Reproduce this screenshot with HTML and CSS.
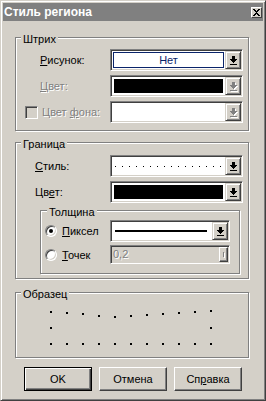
FILE: index.html
```html
<!DOCTYPE html>
<html lang="ru">

<head>
    <meta charset="UTF-8">
    <meta name="viewport" content="width=device-width, initial-scale=1.0">
    <title>Стиль региона</title>
    <link rel="stylesheet" href="styles.css">
</head>

<body>
    <div class="window">
        <div class="titlebar">
            <span class="title">Стиль региона</span>
            <span class="close">
                <svg width="7" height="7" viewBox="0 0 7 7" shape-rendering="crispEdges">
                    <path d="M0 0h2v1h-2zM5 0h2v1h-2zM1 1h2v1h-2zM4 1h2v1h-2zM2 2h3v1h-3zM3 3h1v1h-1zM2 4h3v1h-3zM1 5h2v1h-2zM4 5h2v1h-2zM0 6h2v1h-2zM5 6h2v1h-2z" />
                </svg>
            </span>
        </div>

        <div class="content">
            <div class="group group-stroke">
                <div class="legend">Штрих</div>
                <div class="rows">
                    <div class="row">
                        <span class="label label-stroke"><u>Р</u>исунок:</span>
                        <div class="combo">
                            <div class="value value-focus">Нет</div>
                            <div class="drop">
                                <svg class="arrow" width="7" height="9" viewBox="0 0 7 9" shape-rendering="crispEdges">
                                    <path d="M2 0h3v3h2v1h-1v1h-1v1h-1v1h-1v-1h-1v-1h-1v-1h-1v-1h2zM0 8h7v1h-7z" />
                                </svg>
                            </div>
                        </div>
                    </div>
                    <div class="row">
                        <span class="label label-stroke disabled"><u>Ц</u>вет:</span>
                        <div class="combo">
                            <div class="value"><span class="swatch"></span></div>
                            <div class="drop">
                                <svg class="arrow arrow-off" width="8" height="10" viewBox="0 0 8 10" shape-rendering="crispEdges">
                                    <path class="shade" d="M3 1h3v3h2v1h-1v1h-1v1h-1v1h-1v-1h-1v-1h-1v-1h-1v-1h2zM1 9h7v1h-7z" />
                                    <path d="M2 0h3v3h2v1h-1v1h-1v1h-1v1h-1v-1h-1v-1h-1v-1h-1v-1h2zM0 8h7v1h-7z" />
                                </svg>
                            </div>
                        </div>
                    </div>
                    <div class="row row-check">
                        <span class="check"></span>
                        <span class="label label-check disabled">Цвет <u>ф</u>она:</span>
                        <div class="combo">
                            <div class="value"></div>
                            <div class="drop">
                                <svg class="arrow arrow-off" width="8" height="10" viewBox="0 0 8 10" shape-rendering="crispEdges">
                                    <path class="shade" d="M3 1h3v3h2v1h-1v1h-1v1h-1v1h-1v-1h-1v-1h-1v-1h-1v-1h2zM1 9h7v1h-7z" />
                                    <path d="M2 0h3v3h2v1h-1v1h-1v1h-1v1h-1v-1h-1v-1h-1v-1h-1v-1h2zM0 8h7v1h-7z" />
                                </svg>
                            </div>
                        </div>
                    </div>
                </div>
            </div>

            <div class="group group-border">
                <div class="legend">Граница</div>
                <div class="rows">
                    <div class="row">
                        <span class="label label-border"><u>С</u>тиль:</span>
                        <div class="combo">
                            <div class="value"><span class="dotted"></span></div>
                            <div class="drop">
                                <svg class="arrow" width="7" height="9" viewBox="0 0 7 9" shape-rendering="crispEdges">
                                    <path d="M2 0h3v3h2v1h-1v1h-1v1h-1v1h-1v-1h-1v-1h-1v-1h-1v-1h2zM0 8h7v1h-7z" />
                                </svg>
                            </div>
                        </div>
                    </div>
                    <div class="row">
                        <span class="label label-border">Цв<u>е</u>т:</span>
                        <div class="combo">
                            <div class="value"><span class="swatch"></span></div>
                            <div class="drop">
                                <svg class="arrow" width="7" height="9" viewBox="0 0 7 9" shape-rendering="crispEdges">
                                    <path d="M2 0h3v3h2v1h-1v1h-1v1h-1v1h-1v-1h-1v-1h-1v-1h-1v-1h2zM0 8h7v1h-7z" />
                                </svg>
                            </div>
                        </div>
                    </div>
                </div>

                <div class="group group-width">
                    <div class="legend legend-sub">Толщина</div>
                    <div class="rows rows-sub">
                        <div class="row">
                            <span class="radio"><span class="dot"></span></span>
                            <span class="label label-radio"><u>П</u>иксел</span>
                            <div class="combo combo-short">
                                <div class="value"><span class="solid"></span></div>
                                <div class="drop">
                                    <svg class="arrow" width="7" height="9" viewBox="0 0 7 9" shape-rendering="crispEdges">
                                        <path d="M2 0h3v3h2v1h-1v1h-1v1h-1v1h-1v-1h-1v-1h-1v-1h-1v-1h2zM0 8h7v1h-7z" />
                                    </svg>
                                </div>
                            </div>
                        </div>
                        <div class="row row-edit">
                            <span class="radio"></span>
                            <span class="label label-radio"><u>Т</u>очек</span>
                            <div class="edit">
                                <span class="edit-text disabled">0,2</span>
                                <span class="spin"><span class="spin-mark"></span></span>
                            </div>
                        </div>
                    </div>
                </div>
            </div>

            <div class="group group-sample">
                <div class="legend">Образец</div>
                <svg class="sample" width="232" height="44" viewBox="0 0 232 44" shape-rendering="crispEdges">
                    <g fill="#000">
                        <rect x="34" y="8" width="2" height="2" />
                        <rect x="50" y="9" width="2" height="2" />
                        <rect x="66" y="10" width="2" height="2" />
                        <rect x="82" y="12" width="2" height="2" />
                        <rect x="98" y="13" width="2" height="2" />
                        <rect x="114" y="12" width="2" height="2" />
                        <rect x="130" y="11" width="2" height="2" />
                        <rect x="146" y="10" width="2" height="2" />
                        <rect x="162" y="9" width="2" height="2" />
                        <rect x="178" y="8" width="2" height="2" />
                        <rect x="194" y="7" width="2" height="2" />
                        <rect x="34" y="24" width="2" height="2" />
                        <rect x="194" y="24" width="2" height="2" />
                        <rect x="34" y="40" width="2" height="2" />
                        <rect x="50" y="40" width="2" height="2" />
                        <rect x="66" y="40" width="2" height="2" />
                        <rect x="82" y="40" width="2" height="2" />
                        <rect x="98" y="40" width="2" height="2" />
                        <rect x="114" y="40" width="2" height="2" />
                        <rect x="130" y="40" width="2" height="2" />
                        <rect x="146" y="40" width="2" height="2" />
                        <rect x="162" y="40" width="2" height="2" />
                        <rect x="178" y="40" width="2" height="2" />
                        <rect x="194" y="40" width="2" height="2" />
                    </g>
                </svg>
            </div>

            <div class="buttons">
                <button class="btn btn-default">OK</button>
                <button class="btn">Отмена</button>
                <button class="btn">Сп<u>р</u>авка</button>
            </div>
        </div>
    </div>
</body>

</html>
```

FILE: styles.css
```css
* {
    box-sizing: border-box;
}

body {
    margin: 0;
    font-family: "Liberation Sans", Arial, sans-serif;
    font-size: 11px;
    color: #000;
}

u {
    text-decoration: underline;
    text-underline-offset: 1px;
}

.window {
    width: 266px;
    height: 401px;
    background-color: #d4d0c8;
    border: 1px solid;
    border-color: #d4d0c8 #404040 #404040 #d4d0c8;
    box-shadow: inset 1px 1px #fff, inset -1px -1px #808080;
    padding: 2px;
}

.titlebar {
    height: 18px;
    background-color: #808080;
    display: flex;
    align-items: center;
    justify-content: space-between;
    padding: 0 1px 0 1px;
    color: #fff;
    font-size: 12px;
    font-weight: bold;
}

.close {
    width: 11px;
    height: 11px;
    background-color: #d4d0c8;
    border: 1px solid;
    border-color: #fff #404040 #404040 #fff;
    display: flex;
    align-items: center;
    justify-content: center;
}

.content {
    padding-top: 16px;
}

/* etched group frame */
.group {
    border: 1px solid #808080;
    box-shadow: inset 1px 1px #fff, 1px 1px #fff;
    margin: 0 14px 0 12px;
}

.legend {
    width: fit-content;
    margin: -5px 0 0 5px;
    padding: 0 2px;
    line-height: 13px;
    background-color: #d4d0c8;
}

.legend-sub {
    margin-left: 6px;
}

.group-stroke {
    padding: 0 5px 7px 0;
}

.group-stroke .rows {
    margin-top: 3px;
}

.group-border {
    margin-top: 11px;
    padding: 0 5px 4px 0;
}

.group-border > .rows {
    margin-top: 4px;
}

.group-width {
    margin: 7px 3px 0 24px;
    padding: 0 9px 9px 0;
}

.rows-sub {
    margin-top: 1px;
}

.group-sample {
    margin-top: 13px;
    padding-bottom: 10px;
}

.sample {
    display: block;
    margin-top: 2px;
}

.row {
    display: flex;
    align-items: center;
    height: 22px;
}

.row + .row {
    margin-top: 4px;
}

.rows-sub .row + .row {
    margin-top: 3px;
}

.row-edit {
    height: 19px;
}

.label {
    white-space: nowrap;
}

.label-stroke {
    width: 94px;
    padding-left: 24px;
}

.label-border {
    width: 94px;
    padding-left: 19px;
}

.row-check {
    padding-left: 9px;
}

.label-check {
    width: 68px;
}

.label-radio {
    width: 48px;
}

.disabled {
    color: #808080;
    text-shadow: 1px 1px #fff;
}

.check {
    width: 13px;
    height: 13px;
    margin-right: 4px;
    border: 1px solid;
    border-color: #808080 #fff #fff #808080;
    box-shadow: inset 1px 1px #404040, inset -1px -1px #d4d0c8;
    background-color: #d4d0c8;
}

.radio {
    width: 12px;
    height: 12px;
    margin: 0 5px 0 4px;
    border-radius: 50%;
    border: 1px solid;
    border-color: #808080 #fff #fff #808080;
    box-shadow: inset 1px 1px #404040, inset -1px -1px #d4d0c8;
    background-color: #fff;
    display: flex;
    align-items: center;
    justify-content: center;
}

.dot {
    width: 4px;
    height: 4px;
    border-radius: 50%;
    background-color: #000;
}

/* combo boxes */
.combo {
    width: 133px;
    height: 22px;
    display: flex;
    border: 1px solid;
    border-color: #808080 #fff #fff #808080;
    box-shadow: inset 1px 1px #404040, inset -1px -1px #d4d0c8;
    padding: 1px;
}

.combo-short {
    width: 120px;
}

.value {
    flex: 1;
    background-color: #fff;
    display: flex;
    align-items: center;
    justify-content: center;
}

.value-focus {
    color: #0a246a;
    box-shadow: inset 0 0 0 1px #fff, inset 0 0 0 2px #0a246a;
}

.swatch {
    align-self: stretch;
    flex: 1;
    margin: 2px;
    background-color: #000;
}

.dotted {
    flex: 1;
    height: 1px;
    margin: 0 4px 0 3px;
    background: repeating-linear-gradient(90deg, #000 0 1px, transparent 1px 7px);
}

.solid {
    flex: 1;
    height: 2px;
    margin: 0 5px 0 3px;
    background-color: #000;
}

.drop {
    width: 16px;
    background-color: #d4d0c8;
    border: 1px solid;
    border-color: #d4d0c8 #404040 #404040 #d4d0c8;
    box-shadow: inset 1px 1px #fff, inset -1px -1px #808080;
    display: flex;
    align-items: center;
    justify-content: center;
}

.arrow {
    fill: #000;
}

.arrow-off {
    fill: #808080;
    margin: 1px 0 0 1px;
}

.arrow-off .shade {
    fill: #fff;
}

.edit {
    width: 120px;
    height: 19px;
    display: flex;
    border: 1px solid;
    border-color: #808080 #fff #fff #808080;
    box-shadow: inset 1px 1px #404040, inset -1px -1px #d4d0c8;
    padding: 1px;
}

.edit-text {
    flex: 1;
    padding-left: 1px;
    line-height: 15px;
}

.spin {
    width: 9px;
    border: 1px solid;
    border-color: #fff #404040 #404040 #fff;
    box-shadow: inset -1px -1px #808080;
    display: flex;
    align-items: center;
    justify-content: center;
}

.spin-mark {
    width: 1px;
    height: 5px;
    background-color: #808080;
    box-shadow: 1px 1px #fff;
}

/* dialog buttons */
.buttons {
    display: flex;
    justify-content: center;
    gap: 7px;
    margin-top: 9px;
}

.btn {
    width: 68px;
    height: 24px;
    padding: 0;
    font-family: inherit;
    font-size: 11px;
    color: #000;
    background-color: #d4d0c8;
    border: 1px solid;
    border-color: #fff #404040 #404040 #fff;
    box-shadow: inset -1px -1px #808080;
}

.btn-default {
    border: 1px solid #000;
    box-shadow: inset 1px 1px #fff, inset -1px -1px #404040, inset -2px -2px #808080;
}
```
